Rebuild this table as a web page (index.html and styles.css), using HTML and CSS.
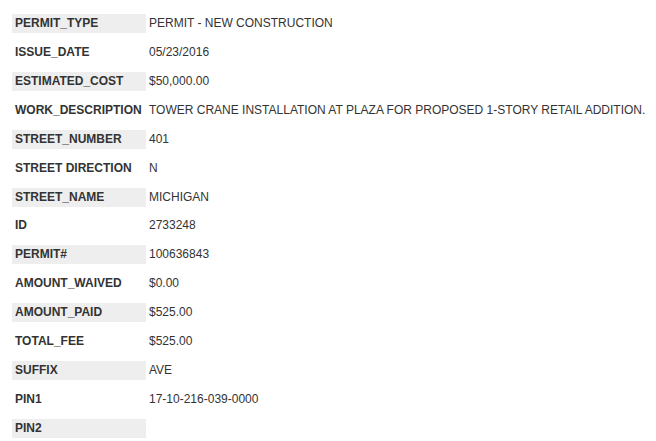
FILE: index.html
```html
<!DOCTYPE html>
<html>
<head>
<meta charset="utf-8">
<link rel="stylesheet" href="styles.css">
</head>
<body>
<div class="record">
  <div class="label shaded">PERMIT_TYPE</div><div class="value">PERMIT - NEW CONSTRUCTION</div>
  <div class="label">ISSUE_DATE</div><div class="value">05/23/2016</div>
  <div class="label shaded">ESTIMATED_COST</div><div class="value">$50,000.00</div>
  <div class="label">WORK_DESCRIPTION</div><div class="value">TOWER CRANE INSTALLATION AT PLAZA FOR PROPOSED 1-STORY RETAIL ADDITION.</div>
  <div class="label shaded">STREET_NUMBER</div><div class="value">401</div>
  <div class="label">STREET DIRECTION</div><div class="value">N</div>
  <div class="label shaded">STREET_NAME</div><div class="value">MICHIGAN</div>
  <div class="label">ID</div><div class="value">2733248</div>
  <div class="label shaded">PERMIT#</div><div class="value">100636843</div>
  <div class="label">AMOUNT_WAIVED</div><div class="value">$0.00</div>
  <div class="label shaded">AMOUNT_PAID</div><div class="value">$525.00</div>
  <div class="label">TOTAL_FEE</div><div class="value">$525.00</div>
  <div class="label shaded">SUFFIX</div><div class="value">AVE</div>
  <div class="label">PIN1</div><div class="value">17-10-216-039-0000</div>
  <div class="label shaded">PIN2</div><div class="value"></div>
</div>
</body>
</html>
```

FILE: styles.css
```css
html, body {
  margin: 0;
  padding: 0;
  background: #ffffff;
}
body {
  padding: 14px 0 0 12px;
  font-family: "Liberation Sans", Arial, sans-serif;
  font-size: 12px;
  color: #333333;
}
.record {
  display: grid;
  grid-template-columns: 134px auto;
  grid-auto-rows: 19px;
  row-gap: 9.93px;
  justify-content: start;
}
.label,
.value {
  line-height: 14px;
  padding: 2px 3px 3px 3px;
  white-space: nowrap;
}
.label {
  font-weight: bold;
}
.shaded {
  background: #eeeeee;
}
```
